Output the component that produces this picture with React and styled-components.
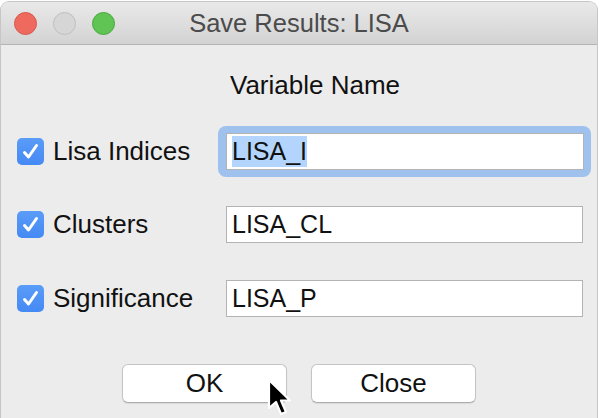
import React from 'react';
import styled, { createGlobalStyle } from 'styled-components';

const GlobalStyle = createGlobalStyle`
  html, body {
    margin: 0;
    padding: 0;
    background: #ffffff;
    overflow: hidden;
  }
  body {
    font-family: "Liberation Sans", Arial, sans-serif;
  }
`;

const Window = styled.div`
  position: relative;
  width: 598px;
  height: 420px;
  margin-top: 1px;
  background: #ececec;
  border: 1px solid #c6c6c6;
  border-bottom: none;
  border-radius: 9px 9px 0 0;
  overflow: hidden;
  box-sizing: border-box;
`;

const TitleBar = styled.div`
  height: 42px;
  display: flex;
  align-items: center;
  position: relative;
  background: linear-gradient(#e9e9e9, #d3d3d3);
  border-bottom: 1px solid #b4b4b4;
`;

const Lights = styled.div`
  display: flex;
  gap: 16px;
  padding-left: 13px;
`;

const Light = styled.span`
  width: 23px;
  height: 23px;
  border-radius: 50%;
  background: ${p => p.$color};
  border: 1px solid ${p => p.$edge};
  box-sizing: border-box;
`;

const Title = styled.div`
  position: absolute;
  left: 0;
  right: 0;
  text-align: center;
  font-size: 25.5px;
  color: #4b4b4b;
  pointer-events: none;
`;

const Content = styled.div`
  padding: 25px 0 0;
`;

const Header = styled.div`
  text-align: center;
  padding-left: 32px;
  font-size: 26px;
  line-height: 30px;
  color: #111;
`;

const Rows = styled.div`
  display: grid;
  grid-template-columns: 209px 357px;
  row-gap: 37px;
  padding-left: 16px;
  margin-top: 34px;
  align-items: center;
`;

const CheckLabel = styled.label`
  display: flex;
  align-items: center;
  gap: 9px;
  font-size: 26px;
  color: #111;
`;

const Box = styled.span`
  width: 27px;
  height: 27px;
  border-radius: 5px;
  background: linear-gradient(#5a9cf8, #4589f4);
  display: flex;
  align-items: center;
  justify-content: center;
`;

const Ring = styled.div`
  margin: -8px;
  padding: 7px 7px 7px 8px;
  border-radius: 8px;
  background: #9fc1ee;
`;

const Field = styled.div`
  height: 37px;
  box-sizing: border-box;
  background: #fff;
  border: 1px solid #b3b3b3;
  display: flex;
  align-items: center;
  padding-left: 5px;
  font-size: 25px;
  color: #111;
`;

const Selected = styled.span`
  background: #b3d4fc;
  line-height: 31px;
`;

const Buttons = styled.div`
  display: flex;
  justify-content: center;
  gap: 24px;
  margin-top: 47px;
  position: relative;
`;

const Button = styled.button`
  width: 165px;
  height: 39px;
  background: #fff;
  border: 1px solid #c4c4c4;
  border-bottom-color: #adadad;
  border-radius: 6px;
  box-shadow: 0 1px 1px rgba(0, 0, 0, 0.08);
  font-family: "Liberation Sans", Arial, sans-serif;
  font-size: 26px;
  color: #111;
  padding: 0;
`;

const Cursor = styled.svg`
  position: absolute;
  left: 265px;
  top: 14px;
`;

function Check({ label }) {
  return (
    <CheckLabel>
      <Box>
        <svg width="19" height="19" viewBox="0 0 19 19">
          <path d="M3.5 10.5 L7.5 15 L15.5 3.5" fill="none" stroke="#fff" strokeWidth="3" strokeLinecap="round" strokeLinejoin="round" />
        </svg>
      </Box>
      {label}
    </CheckLabel>
  );
}

export default function App() {
  return (
    <>
      <GlobalStyle />
      <Window>
        <TitleBar>
          <Lights>
            <Light $color="#ee6a5f" $edge="#d9564c" />
            <Light $color="#d6d6d6" $edge="#bfbfbf" />
            <Light $color="#5fc454" $edge="#4aa940" />
          </Lights>
          <Title>Save Results: LISA</Title>
        </TitleBar>
        <Content>
          <Header>Variable Name</Header>
          <Rows>
            <Check label="Lisa Indices" />
            <Ring>
              <Field><Selected>LISA_I</Selected></Field>
            </Ring>
            <Check label="Clusters" />
            <Field>LISA_CL</Field>
            <Check label="Significance" />
            <Field>LISA_P</Field>
          </Rows>
          <Buttons>
            <Button>OK</Button>
            <Button>Close</Button>
            <Cursor width="28" height="42" viewBox="0 0 28 42">
              <path d="M3 2 L3 30 L10 24 L15 36 L20 34 L15 22.5 L24 22.5 Z" fill="#000" stroke="#fff" strokeWidth="2.2" strokeLinejoin="round" />
            </Cursor>
          </Buttons>
        </Content>
      </Window>
    </>
  );
}
